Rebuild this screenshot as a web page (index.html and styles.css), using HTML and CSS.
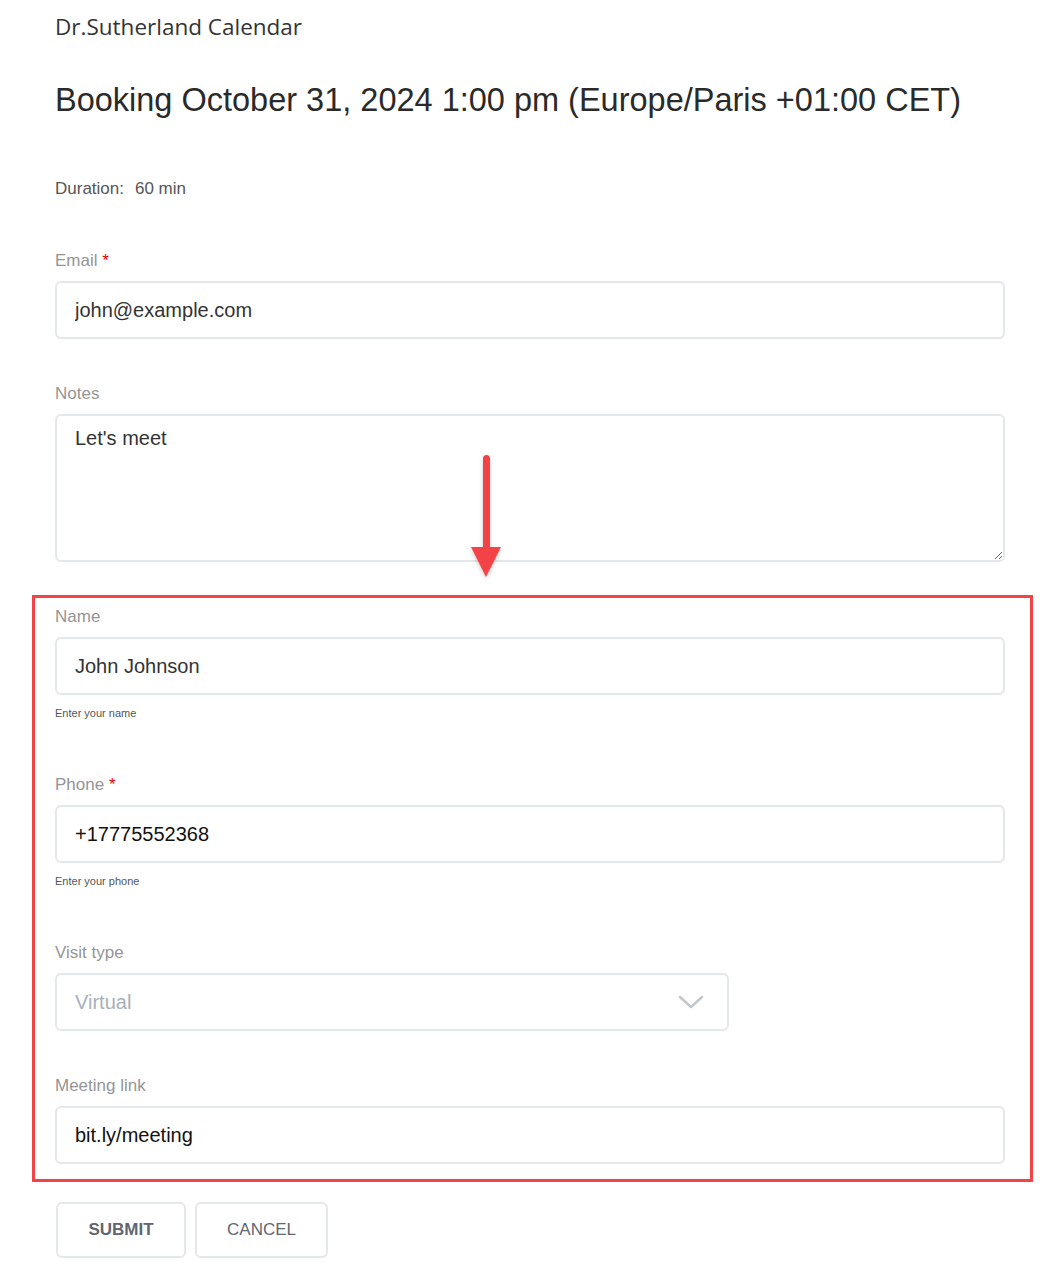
FILE: index.html
```html
<!DOCTYPE html>
<html>
<head>
<meta charset="utf-8">
<link rel="stylesheet" href="styles.css">
</head>
<body>
<div class="page">
  <div class="brand">Dr.Sutherland Calendar</div>
  <h1 class="heading">Booking October 31, 2024 1:00 pm (Europe/Paris +01:00 CET)</h1>
  <div class="duration"><span>Duration:</span><span>60 min</span></div>

  <div class="field">
    <label class="label">Email <span class="req">*</span></label>
    <input class="control" type="text" value="john@example.com">
  </div>

  <div class="field">
    <label class="label">Notes</label>
    <textarea class="control textarea">Let's meet</textarea>
  </div>

  <div class="extra">
    <div class="field has-help">
      <label class="label">Name</label>
      <input class="control" type="text" value="John Johnson">
      <div class="help">Enter your name</div>
    </div>

    <div class="field has-help">
      <label class="label">Phone <span class="req">*</span></label>
      <input class="control dark" type="text" value="+17775552368">
      <div class="help">Enter your phone</div>
    </div>

    <div class="field">
      <label class="label">Visit type</label>
      <div class="select-wrap">
        <select class="control select"><option>Virtual</option></select>
        <svg class="chevron" width="26" height="16" viewBox="0 0 26 16"><path d="M2 3 L13 13 L24 3" fill="none" stroke="#c4c7cc" stroke-width="2.6" stroke-linecap="round" stroke-linejoin="round"/></svg>
      </div>
    </div>

    <div class="field last">
      <label class="label">Meeting link</label>
      <input class="control dark" type="text" value="bit.ly/meeting">
    </div>

    <div class="highlight"></div>
    <div class="arrow">
      <div class="shaft"></div>
      <div class="head"></div>
    </div>
  </div>

  <div class="actions">
    <button class="btn primary">SUBMIT</button>
    <button class="btn">CANCEL</button>
  </div>
</div>
</body>
</html>
```

FILE: styles.css
```css
html, body {
  margin: 0;
  padding: 0;
  background: #fff;
}
body {
  font-family: "Liberation Sans", Arial, sans-serif;
  color: #333;
}
.page {
  width: 950px;
  padding-left: 55px;
}
.brand {
  font-family: "Open Sans", sans-serif;
  font-size: 22.5px;
  line-height: 30px;
  color: #333;
  margin-top: 12px;
}
.heading {
  font-family: "Liberation Sans", Arial, sans-serif;
  font-weight: normal;
  font-size: 32.5px;
  line-height: 38px;
  color: #2a2a2a;
  margin: 39px 0 0 0;
  white-space: nowrap;
}
.duration {
  display: flex;
  gap: 11px;
  font-size: 17px;
  line-height: 20px;
  color: #555;
  margin-top: 60px;
  margin-bottom: 52px;
}
.field {
  margin-bottom: 45px;
}
.field.has-help {
  margin-bottom: 55px;
}
.field.last {
  margin-bottom: 38px;
}
.label {
  display: block;
  font-size: 17px;
  line-height: 20px;
  color: #959595;
  margin-bottom: 10px;
}
.req {
  color: #e60000;
}
.control {
  display: block;
  box-sizing: border-box;
  width: 950px;
  height: 58px;
  margin: 0;
  border: 2px solid #e4e7eb;
  border-radius: 6px;
  padding: 0 18px;
  font-family: "Liberation Sans", Arial, sans-serif;
  font-size: 20px;
  color: #333;
  background: #fff;
  outline: none;
}
.control.dark {
  color: #111;
}
.textarea {
  height: 148px;
  padding: 10px 18px;
  line-height: 24px;
  resize: vertical;
}
.help {
  font-size: 11px;
  line-height: 14px;
  color: #555;
  margin-top: 11px;
}
.select-wrap {
  position: relative;
  width: 674px;
}
.select {
  width: 674px;
  appearance: none;
  -webkit-appearance: none;
  color: #a9b0ba;
}
.chevron {
  position: absolute;
  left: 623px;
  top: 21px;
}
.extra {
  position: relative;
}
.highlight {
  position: absolute;
  left: -23px;
  top: -12px;
  width: 995px;
  height: 581px;
  border: 3px solid #f44346;
  pointer-events: none;
}
.arrow {
  position: absolute;
  left: 416px;
  top: -152px;
  width: 30px;
  height: 124px;
  display: flex;
  flex-direction: column;
  align-items: center;
  filter: drop-shadow(0 2px 2px rgba(0,0,0,0.2));
}
.shaft {
  width: 7px;
  height: 96px;
  background: #f44346;
  border-radius: 4px 4px 0 0;
}
.head {
  width: 0;
  height: 0;
  border-left: 15px solid transparent;
  border-right: 15px solid transparent;
  border-top: 30px solid #f44346;
  margin-top: -4px;
}
.actions {
  display: flex;
  gap: 9px;
  padding-left: 1px;
}
.btn {
  box-sizing: border-box;
  height: 56px;
  border: 2px solid #e4e7eb;
  border-radius: 6px;
  background: #fff;
  font-family: "Liberation Sans", Arial, sans-serif;
  font-size: 17px;
  color: #5f6670;
  padding: 0;
  width: 133px;
}
.btn.primary {
  width: 130px;
  font-weight: bold;
}
```
